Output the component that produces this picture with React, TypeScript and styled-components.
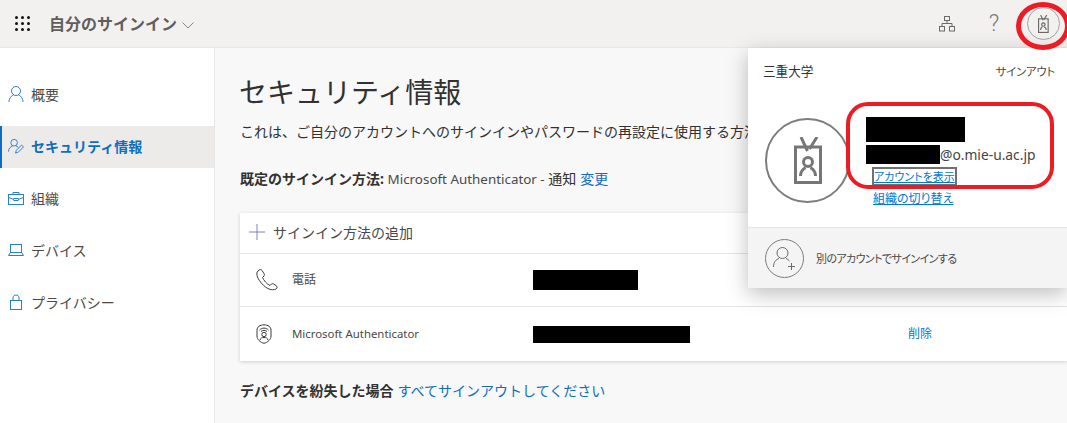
import * as React from "react";
import styled, { createGlobalStyle } from "styled-components";

const GlobalStyle = createGlobalStyle`
    html, body {
        margin: 0;
        padding: 0;
        background: #f8f8f8;
        overflow: hidden;
    }
    body {
        font-family: "Noto Sans", "Noto Sans CJK JP", sans-serif;
        color: #323130;
    }
`;

const Page = styled.div`
    position: relative;
    width: 1067px;
    height: 423px;
    overflow: hidden;
    display: flex;
    flex-direction: column;
`;

/* Header */

const Header = styled.header`
    height: 48px;
    flex: none;
    display: flex;
    align-items: center;
    background: #f2f1f0;
    border-bottom: 1px solid #e9e8e7;
    box-sizing: border-box;
`;

const Waffle = styled.div`
    width: 16px;
    margin-left: 15px;
    display: grid;
    grid-template-columns: repeat(3, 3px);
    gap: 3px;
`;

const WaffleDot = styled.span`
    width: 3px;
    height: 3px;
    border-radius: 50%;
    background: #111;
`;

const AppTitle = styled.div`
    font-size: 16px;
    font-weight: 700;
    color: #605e5c;
    line-height: 48px;
    margin-left: 18px;
`;

const HeaderActions = styled.div`
    margin-left: auto;
    display: flex;
    align-items: center;
    margin-right: 7px;
`;

const HeaderButton = styled.div`
    width: 48px;
    height: 48px;
    display: flex;
    align-items: center;
    justify-content: center;
    color: #7a7a7a;
    font-family: "Roboto", sans-serif;
    font-weight: 300;
    font-size: 23px;
`;

const HeaderAvatar = styled.div`
    width: 31px;
    height: 31px;
    border: 1px solid #a3a3a3;
    border-radius: 50%;
    display: flex;
    align-items: center;
    justify-content: center;
    margin-left: 9px;
`;

/* Body */

const Body = styled.div`
    flex: 1;
    display: flex;
    min-height: 0;
`;

const Sidebar = styled.nav`
    width: 215px;
    flex: none;
    box-sizing: border-box;
    background: #fff;
    border-right: 1px solid #e9e8e7;
    padding-top: 26px;
    display: flex;
    flex-direction: column;
    gap: 10px;
`;

const NavItem = styled.div<{ $active?: boolean }>`
    height: 42px;
    display: flex;
    align-items: center;
    gap: 7px;
    padding: 0 0 2px 6px;
    box-sizing: border-box;
    font-size: 14px;
    font-weight: ${(p) => (p.$active ? 700 : 400)};
    color: ${(p) => (p.$active ? "#106ebe" : "#4a4947")};
    background: ${(p) => (p.$active ? "#edebe9" : "transparent")};
    border-left: 2px solid ${(p) => (p.$active ? "#0f6cbd" : "transparent")};
`;

const NavIcon = styled.span`
    width: 16px;
    display: flex;
    align-items: center;
    justify-content: center;
`;

const Main = styled.main`
    flex: 1;
    min-width: 0;
    padding: 0 0 0 25px;
    background: #f8f8f8;
`;

const Title = styled.h1`
    margin: 22px 0 0 -1px;
    font-size: 28px;
    font-weight: 400;
    line-height: 44px;
    color: #323130;
`;

const Description = styled.p`
    margin: 8px 0 0;
    font-size: 14px;
    line-height: 20px;
    color: #323130;
    white-space: nowrap;
`;

const DefaultLine = styled.p`
    margin: 27px 0 0;
    font-size: 14px;
    line-height: 20px;
    white-space: nowrap;
`;

const Strong = styled.span`
    font-weight: 700;
`;

const Latin = styled.span`
    font-size: 13.4px;
    color: #4a4947;
`;

const TextLink = styled.a`
    color: #106ebe;
    margin-left: 4px;
`;

const MethodCard = styled.section`
    margin-top: 24px;
    background: #fff;
    box-shadow: 0 1px 4px rgba(0, 0, 0, 0.16);
`;

const AddRow = styled.div`
    height: 41px;
    display: flex;
    align-items: center;
    gap: 8px;
    padding: 0 0 2px 9px;
    font-size: 14px;
    color: #4a4947;
    box-sizing: border-box;
    border-bottom: 1px solid #e6e5e4;
`;

const MethodRow = styled.div<{ $last?: boolean }>`
    height: ${(p) => (p.$last ? 54 : 53)}px;
    display: grid;
    grid-template-columns: 52px 241px 375px 1fr;
    align-items: center;
    box-sizing: border-box;
    font-size: 12px;
    color: #4a4947;
    border-bottom: ${(p) => (p.$last ? "none" : "1px solid #e6e5e4")};
`;

const MethodIcon = styled.div`
    padding-left: 16px;
    display: flex;
    align-items: center;
`;

const MethodLabel = styled.span`
    padding-bottom: 2px;
`;

const MethodLatin = styled(MethodLabel)`
    font-size: 11.4px;
`;

const Redacted = styled.div<{ $w: number; $h: number }>`
    width: ${(p) => p.$w}px;
    height: ${(p) => p.$h}px;
    background: #000;
    flex: none;
`;

const DeleteLink = styled.a`
    color: #0078d4;
    font-size: 12px;
    padding-bottom: 2px;
`;

const LostLine = styled.p`
    margin: 20px 0 0;
    font-size: 14px;
    line-height: 20px;
    white-space: nowrap;
`;

/* Account popup, lies over the page */

const AccountPopup = styled.aside`
    position: absolute;
    top: 48px;
    right: 0;
    width: 319px;
    height: 240px;
    background: #fff;
    box-shadow: 0 6px 20px rgba(0, 0, 0, 0.26);
    display: flex;
    flex-direction: column;
    font-feature-settings: "palt";
`;

const PopupTop = styled.div`
    display: flex;
    justify-content: space-between;
    align-items: center;
    padding: 15px 12px 0 15px;
    line-height: 18px;
    color: #323130;
`;

const OrgName = styled.span`
    font-size: 12.6px;
`;

const SignOut = styled.span`
    font-size: 11.4px;
    letter-spacing: -0.2px;
    color: #4a4947;
`;

const PopupAccount = styled.div`
    display: flex;
    padding: 37px 0 0 17px;
    flex: 1;
`;

const BigAvatar = styled.div`
    width: 85px;
    height: 85px;
    box-sizing: border-box;
    border: 2px solid #7d7d7d;
    border-radius: 50%;
    display: flex;
    align-items: center;
    justify-content: center;
    flex: none;
`;

const AccountInfo = styled.div`
    margin-left: 16px;
    margin-top: -1px;
    display: flex;
    flex-direction: column;
    align-items: flex-start;
`;

const EmailRow = styled.div`
    display: flex;
    align-items: center;
    margin-top: 3px;
    font-size: 13.8px;
    line-height: 19px;
    color: #444;
`;

const AccountLink = styled.a<{ $focused?: boolean }>`
    font-size: ${(p) => (p.$focused ? 11 : 12)}px;
    line-height: 15px;
    color: #0078d4;
    text-decoration: underline;
    margin: ${(p) => (p.$focused ? "5px 0 0 8px" : "7px 0 0 7px")};
    outline: ${(p) => (p.$focused ? "2px solid #707070" : "none")};
    outline-offset: 0;
`;

const PopupFooter = styled.div`
    height: 61px;
    flex: none;
    display: flex;
    align-items: center;
    gap: 12px;
    padding-left: 17px;
    box-sizing: border-box;
    background: #f4f4f4;
    border-top: 1px solid #e6e6e6;
    font-size: 11px;
    letter-spacing: -0.6px;
    color: #4a4947;
`;

const SmallAvatar = styled.div`
    width: 39px;
    height: 39px;
    box-sizing: border-box;
    border: 1px solid #7d7d7d;
    border-radius: 50%;
    display: flex;
    align-items: center;
    justify-content: center;
`;

/* Red marks someone drew on the screenshot */

const RedEllipse = styled.div`
    position: absolute;
    left: 1016px;
    top: 2px;
    width: 54px;
    height: 48px;
    box-sizing: border-box;
    border: 5px solid #ed1c24;
    border-radius: 50%;
`;

const RedBox = styled.div`
    position: absolute;
    left: 846px;
    top: 102px;
    width: 208px;
    height: 87px;
    box-sizing: border-box;
    border: 4px solid #ed1c24;
    border-radius: 22px;
`;

/* Icons */

function Chevron(): JSX.Element {
    return (
        <svg width="12" height="7" viewBox="0 0 12 7" style={{ marginLeft: 5, marginTop: 4 }}>
            <path d="M0.5 0.5 L6 6 L11.5 0.5" fill="none" stroke="#8a8886" strokeWidth="1" />
        </svg>
    );
}

function OrgIcon(): JSX.Element {
    return (
        <svg
            width="16"
            height="16"
            viewBox="0 0 16 16"
            fill="none"
            stroke="#6b6a68"
            strokeWidth="1"
            style={{ marginLeft: 2 }}
        >
            <rect x="5.5" y="0.5" width="5" height="4" />
            <rect x="0.5" y="10.5" width="5" height="4.5" />
            <rect x="10.5" y="10.5" width="5" height="4.5" />
            <path d="M8 4.5 V7.5 M3 10.5 V7.5 H13 V10.5" />
        </svg>
    );
}

function BadgeIcon({ height, stroke, width }: { height: number; stroke: string; width: number }): JSX.Element {
    return (
        <svg
            width={(height * 28) / 47}
            height={height}
            viewBox="0 0 28 47"
            fill="none"
            stroke={stroke}
            strokeWidth={width}
        >
            <path d="M7 0 L13.5 14 M23 0 L15.5 12" />
            <rect x="1.5" y="10" width="25" height="35.5" />
            <circle cx="14" cy="25" r="4.5" />
            <path d="M6.5 39 C6.5 34 9 32 11.5 30.5 M21.5 39 C21.5 34 19 32 16.5 30.5" />
        </svg>
    );
}

function PersonIcon(): JSX.Element {
    return (
        <svg width="16" height="18" viewBox="0 0 16 18" fill="none" stroke="#2b7cd3" strokeWidth="1">
            <circle cx="8" cy="6" r="4.5" />
            <path d="M1 17 C1 12.5 4 10.5 5.5 10 M15 17 C15 12.5 12 10.5 10.5 10" />
        </svg>
    );
}

function PersonEditIcon(): JSX.Element {
    return (
        <svg width="17" height="16" viewBox="0 0 17 16" fill="none" stroke="#2b7cd3" strokeWidth="1">
            <circle cx="6.5" cy="4.5" r="3.5" />
            <path d="M0.5 14 C0.5 10.5 3 8.5 5 8 M8.5 8 C9.5 8.3 10.5 9 11 9.5" />
            <path d="M8 15.5 L8.8 12.5 L14.5 7 L16.5 9 L10.8 14.7 Z" />
        </svg>
    );
}

function BriefcaseIcon(): JSX.Element {
    return (
        <svg width="16" height="13" viewBox="0 0 16 13" fill="none" stroke="#2b7cd3" strokeWidth="1">
            <rect x="0.5" y="2.5" width="15" height="10" />
            <path d="M5 2.5 V0.5 H11 V2.5 M0.5 5.5 L6 7.5 M15.5 5.5 L10 7.5" />
            <rect x="6" y="6.5" width="4" height="2" />
        </svg>
    );
}

function LaptopIcon(): JSX.Element {
    return (
        <svg width="16" height="12" viewBox="0 0 16 12" fill="none" stroke="#2b7cd3" strokeWidth="1">
            <rect x="2.5" y="0.5" width="11" height="8" />
            <path d="M0.5 11.5 L2 9 M15.5 11.5 L14 9 M0.5 11.5 H15.5" />
        </svg>
    );
}

function LockIcon(): JSX.Element {
    return (
        <svg width="16" height="16" viewBox="0 0 16 16" fill="none" stroke="#2b7cd3" strokeWidth="1">
            <rect x="2.5" y="6.5" width="11" height="9" />
            <path d="M5 6.5 V4 C5 0 11 0 11 4 V6.5" />
        </svg>
    );
}

function PlusIcon({ size, stroke }: { size: number; stroke: string }): JSX.Element {
    return (
        <svg width={size} height={size} viewBox="0 0 16 16" fill="none" stroke={stroke} strokeWidth="1">
            <path d="M8 0 V16 M0 8 H16" />
        </svg>
    );
}

function PhoneIcon(): JSX.Element {
    return (
        <svg width="22" height="22" viewBox="0 0 22 22" fill="none" stroke="#3b3a39" strokeWidth="1">
            <path d="M3 1 L1.2 3 C0.6 4 0.8 6 1.5 8 C3 12 8 18 13 20 C15.5 21 18 21 20 20 C21.5 19 21.5 17.5 20 16.5 L17.5 15 C16.5 14.5 15.5 14.5 15 15.5 L14 16.5 C11 15.5 7.5 11 6.5 8.5 L8 7 C8.5 6 8.5 5.5 8 4.5 L6 1.5 C5.3 0.5 4 0.3 3 1 Z" />
        </svg>
    );
}

function AuthenticatorIcon(): JSX.Element {
    return (
        <svg width="16" height="20" viewBox="0 0 16 20" fill="none" stroke="#3b3a39" strokeWidth="1">
            <path d="M8 0.8 C4 0.8 1 3 1 6 V12 C1 15.5 4.5 18.5 8 19.3 C11.5 18.5 15 15.5 15 12 V6 C15 3 12 0.8 8 0.8 Z" />
            <path d="M3.5 6 C6 3.5 10 3.5 12.5 6 M5 7.5 C6.8 6 9.2 6 11 7.5" />
            <circle cx="8" cy="10.5" r="2.2" />
            <path d="M4 16 C4.5 14 6 13.5 8 13.5 C10 13.5 11.5 14 12 16" />
        </svg>
    );
}

function AddPersonIcon(): JSX.Element {
    return (
        <svg width="25" height="25" viewBox="0 0 25 25" fill="none" stroke="#6b6a68" strokeWidth="1">
            <circle cx="10.5" cy="7" r="5.5" />
            <path d="M1.5 21 C1.5 16 4 13.5 7 12.5 M14 12.5 C15.5 13 16.5 13.8 17.5 15" />
            <path d="M19.5 17 V24 M16 20.5 H23" />
        </svg>
    );
}

export default function App(): JSX.Element {
    const navItems = [
        { label: "概要", icon: <PersonIcon /> },
        { label: "セキュリティ情報", icon: <PersonEditIcon />, active: true },
        { label: "組織", icon: <BriefcaseIcon /> },
        { label: "デバイス", icon: <LaptopIcon /> },
        { label: "プライバシー", icon: <LockIcon /> },
    ];
    return (
        <Page>
            <GlobalStyle />
            <Header>
                <Waffle>
                    {Array.from({ length: 9 }).map((_, i) => (
                        <WaffleDot key={i} />
                    ))}
                </Waffle>
                <AppTitle>自分のサインイン</AppTitle>
                <Chevron />
                <HeaderActions>
                    <HeaderButton>
                        <OrgIcon />
                    </HeaderButton>
                    <HeaderButton>?</HeaderButton>
                    <HeaderAvatar>
                        <BadgeIcon height={18} stroke="#6b6a68" width={3} />
                    </HeaderAvatar>
                </HeaderActions>
            </Header>
            <Body>
                <Sidebar>
                    {navItems.map((item) => (
                        <NavItem key={item.label} $active={item.active}>
                            <NavIcon>{item.icon}</NavIcon>
                            {item.label}
                        </NavItem>
                    ))}
                </Sidebar>
                <Main>
                    <Title>セキュリティ情報</Title>
                    <Description>
                        これは、ご自分のアカウントへのサインインやパスワードの再設定に使用する方法です。
                    </Description>
                    <DefaultLine>
                        <Strong>既定のサインイン方法:</Strong> <Latin>Microsoft Authenticator - </Latin>通知
                        <TextLink>変更</TextLink>
                    </DefaultLine>
                    <MethodCard>
                        <AddRow>
                            <PlusIcon size={16} stroke="#7b83c4" />
                            サインイン方法の追加
                        </AddRow>
                        <MethodRow>
                            <MethodIcon>
                                <PhoneIcon />
                            </MethodIcon>
                            <MethodLabel>電話</MethodLabel>
                            <Redacted $w={105} $h={20} />
                        </MethodRow>
                        <MethodRow $last>
                            <MethodIcon>
                                <AuthenticatorIcon />
                            </MethodIcon>
                            <MethodLatin>Microsoft Authenticator</MethodLatin>
                            <Redacted $w={157} $h={17} />
                            <DeleteLink>削除</DeleteLink>
                        </MethodRow>
                    </MethodCard>
                    <LostLine>
                        <Strong>デバイスを紛失した場合</Strong>
                        <TextLink>すべてサインアウトしてください</TextLink>
                    </LostLine>
                </Main>
            </Body>
            <AccountPopup>
                <PopupTop>
                    <OrgName>三重大学</OrgName>
                    <SignOut>サインアウト</SignOut>
                </PopupTop>
                <PopupAccount>
                    <BigAvatar>
                        <BadgeIcon height={47} stroke="#767676" width={3} />
                    </BigAvatar>
                    <AccountInfo>
                        <Redacted $w={99} $h={25} />
                        <EmailRow>
                            <Redacted $w={74} $h={19} />
                            @o.mie-u.ac.jp
                        </EmailRow>
                        <AccountLink $focused>アカウントを表示</AccountLink>
                        <AccountLink>組織の切り替え</AccountLink>
                    </AccountInfo>
                </PopupAccount>
                <PopupFooter>
                    <SmallAvatar>
                        <AddPersonIcon />
                    </SmallAvatar>
                    別のアカウントでサインインする
                </PopupFooter>
            </AccountPopup>
            <RedEllipse />
            <RedBox />
        </Page>
    );
}
